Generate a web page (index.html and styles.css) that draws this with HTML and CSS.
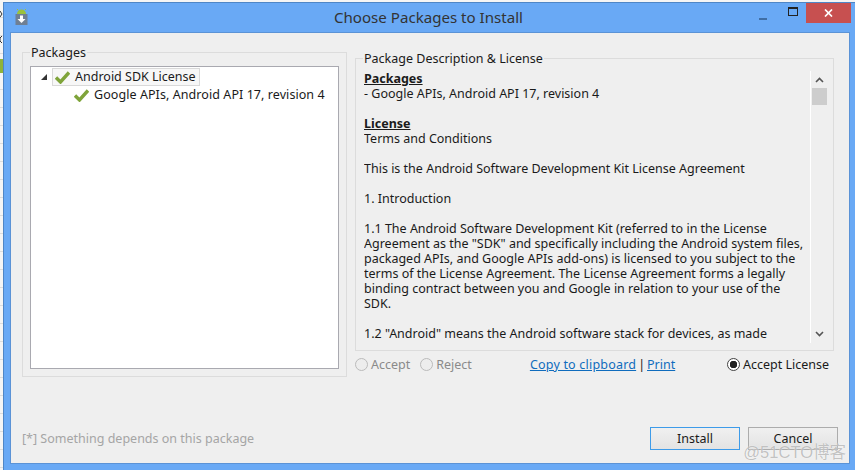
FILE: index.html
```html
<!DOCTYPE html>
<html lang="en">
<head>
    <meta charset="UTF-8">
    <title>Choose Packages to Install</title>
    <link rel="stylesheet" href="styles.css">
</head>
<body>

<div class="desktop">
    <!-- Sliver of the window behind the dialog -->
    <div class="behind">
        <svg width="3" height="74" viewBox="0 0 3 74">
            <path d="M0 11 L2 14 L0 17" fill="none" stroke="#333" stroke-width="1"/>
            <path d="M2 36 L0 38 L0 41 L2 43" fill="none" stroke="#333" stroke-width="1"/>
            <rect x="0" y="59" width="3" height="14" fill="#8fb339"/>
        </svg>
    </div>

    <div class="dialog">
        <div class="titlebar">
            <svg class="app-icon" width="13" height="16" viewBox="0 0 13 16">
                <path d="M2 5 A4.5 4.5 0 0 1 11 5 Z" fill="#9bc23c"/>
                <path d="M3 1 L2 0 M10 1 L11 0" stroke="#9bc23c" stroke-width="1"/>
                <rect x="0.5" y="5" width="12" height="11" fill="#6f7f93"/>
                <path d="M5 6.5 H8 V10 H10.5 L6.5 14 L2.5 10 H5 Z" fill="#fff"/>
            </svg>
            <div class="title">Choose Packages to Install</div>
            <div class="controls">
                <div class="ctl ctl-min"><span class="min-bar"></span></div>
                <div class="ctl ctl-max"><span class="max-box"></span></div>
                <div class="ctl-close">
                    <svg width="9" height="8" viewBox="0 0 9 8">
                        <path d="M1 0.5 L8 7.5 M8 0.5 L1 7.5" stroke="#fff" stroke-width="1.7" fill="none"/>
                    </svg>
                </div>
            </div>
        </div>

        <div class="client">
            <div class="panels">
                <!-- Left group with the package tree -->
                <fieldset class="group group-packages">
                    <legend>Packages</legend>
                    <div class="tree">
                        <div class="tree-row">
                            <span class="twisty"></span>
                            <div class="tree-selected">
                                <svg class="check" width="15" height="13" viewBox="0 0 15 13">
                                    <path d="M1 6.5 L5.5 11 L14 1.5" fill="none" stroke="#7fa43a" stroke-width="3.4"/>
                                </svg>
                                <span class="tree-label">Android SDK License</span>
                            </div>
                        </div>
                        <div class="tree-row tree-child">
                            <svg class="check" width="15" height="13" viewBox="0 0 15 13">
                                <path d="M1 6.5 L5.5 11 L14 1.5" fill="none" stroke="#7fa43a" stroke-width="3.4"/>
                            </svg>
                            <span class="tree-label">Google APIs, Android API 17, revision 4</span>
                        </div>
                    </div>
                </fieldset>

                <!-- Right side: license text and accept controls -->
                <div class="license-side">
                    <fieldset class="group group-license">
                        <legend>Package Description &amp; License</legend>
                        <div class="license-box">
                            <div class="license-text">
                                <p><b>Packages</b></p>
                                <p>- Google APIs, Android API 17, revision 4</p>
                                <p>&nbsp;</p>
                                <p><b>License</b></p>
                                <p>Terms and Conditions</p>
                                <p>&nbsp;</p>
                                <p>This is the Android Software Development Kit License Agreement</p>
                                <p>&nbsp;</p>
                                <p>1. Introduction</p>
                                <p>&nbsp;</p>
                                <p>1.1 The Android Software Development Kit (referred to in the License</p>
                                <p>Agreement as the "SDK" and specifically including the Android system files,</p>
                                <p>packaged APIs, and Google APIs add-ons) is licensed to you subject to the</p>
                                <p>terms of the License Agreement. The License Agreement forms a legally</p>
                                <p>binding contract between you and Google in relation to your use of the</p>
                                <p>SDK.</p>
                                <p>&nbsp;</p>
                                <p>1.2 "Android" means the Android software stack for devices, as made</p>
                            </div>
                            <div class="scrollbar">
                                <svg width="9" height="6" viewBox="0 0 9 6">
                                    <path d="M1 5 L4.5 1.5 L8 5" fill="none" stroke="#555" stroke-width="1.6"/>
                                </svg>
                                <span class="thumb"></span>
                                <svg class="arrow-down" width="9" height="6" viewBox="0 0 9 6">
                                    <path d="M1 1 L4.5 4.5 L8 1" fill="none" stroke="#555" stroke-width="1.6"/>
                                </svg>
                            </div>
                        </div>
                    </fieldset>

                    <div class="accept-row">
                        <label class="radio disabled"><span class="dot"></span>Accept</label>
                        <label class="radio disabled"><span class="dot"></span>Reject</label>
                        <div class="links"><a class="copy-link" href="#">Copy to clipboard</a><span>|</span><a href="#">Print</a></div>
                        <label class="radio"><span class="dot on"></span>Accept License</label>
                    </div>
                </div>
            </div>

            <div class="footer">
                <span class="hint">[*] Something depends on this package</span>
                <div class="buttons">
                    <button class="btn btn-default">Install</button>
                    <button class="btn">Cancel</button>
                </div>
            </div>
        </div>
    </div>

    <div class="watermark">@51CTO博客</div>
</div>

</body>
</html>
```

FILE: styles.css
```css
/* Page is the captured region of the desktop */
body {
    margin: 0;
    font-family: "Noto Sans", sans-serif;
    font-size: 12.5px;
    color: #1a1a1a;
}

.desktop {
    position: relative;
    display: flex;
    width: 855px;
    height: 470px;
    overflow: hidden;
    background-color: #f5f5f5;
}

.behind {
    width: 3px;
    flex-shrink: 0;
    background: repeating-linear-gradient(#f5f5f5 0 17px, #dcdcdc 17px 18px);
}

.behind svg {
    display: block;
}

/* Window frame */
.dialog {
    flex: 1;
    display: flex;
    flex-direction: column;
    background-color: #69a9f5;
    border-left: 1px solid #4f86c6;
    border-top: 1px solid #4f86c6;
    margin-top: 2px;
    padding: 0 5px 6px 6px;
}

.titlebar {
    position: relative;
    height: 29px;
    display: flex;
    justify-content: center;
    flex-shrink: 0;
}

.app-icon {
    position: absolute;
    left: 5px;
    top: 6px;
}

.title {
    font-size: 15.1px;
    color: #333;
    margin-top: 4px;
    padding-right: 3px;
}

.controls {
    position: absolute;
    right: -1px;
    top: 0;
    display: flex;
}

.ctl {
    width: 31px;
    height: 20px;
    display: flex;
    justify-content: center;
    align-items: center;
}

.min-bar {
    width: 8px;
    height: 2px;
    margin-top: 11px;
    margin-left: 7px;
    background-color: #3f6ea5;
}

.max-box {
    width: 8px;
    height: 6px;
    border: 1px solid #222;
    border-top-width: 2px;
    margin-bottom: 3px;
    margin-left: 5px;
}

.ctl-close {
    width: 45px;
    height: 20px;
    background-color: #c75050;
    display: flex;
    justify-content: center;
    align-items: center;
}

.client {
    flex: 1;
    display: flex;
    flex-direction: column;
    background-color: #efefef;
    border: 1px solid #5b93d6;
    padding: 12px 11px 0 11px;
    min-height: 0;
}

.panels {
    display: flex;
    gap: 8px;
    align-items: flex-start;
}

/* Group boxes */
.group {
    margin: 0;
    padding: 0;
    border: 1px solid #dcdcdc;
    min-width: 0;
    box-sizing: border-box;
}

.group legend {
    padding: 0 1px;
    line-height: 15px;
}

.group-packages {
    width: 325px;
    height: 332px;
    padding: 6px 7px 7px 7px;
}

.tree {
    height: 303px;
    box-sizing: border-box;
    background-color: #fff;
    border: 1px solid #a9a9b0;
    padding-top: 1px;
}

.tree-row {
    display: flex;
    align-items: center;
    height: 18px;
    white-space: nowrap;
}

.tree-label {
    padding-bottom: 2px;
}

.twisty {
    width: 0;
    height: 0;
    margin-left: 10px;
    margin-right: 5px;
    border-left: 6px solid transparent;
    border-bottom: 6px solid #333;
}

.tree-selected {
    display: flex;
    align-items: center;
    gap: 5px;
    height: 16px;
    padding: 0 3px 0 2px;
    background-color: #f7f7f7;
    border: 1px solid #d9d9d9;
}

.tree-child {
    padding-left: 43px;
    gap: 5px;
    letter-spacing: 0.07px;
}

.license-side {
    flex: 1;
    min-width: 0;
}

.group-license {
    width: 479px;
    height: 300px;
    margin-top: 6px;
    padding: 5px 6px 7px 2px;
}

.group-license legend {
    margin-left: 5px;
}

.license-box {
    display: flex;
    padding-left: 6px;
}

.license-text {
    flex: 1;
    min-width: 0;
    white-space: nowrap;
    overflow: hidden;
}

.license-text p {
    margin: 0;
    line-height: 15px;
}

.license-text b {
    text-decoration: underline;
}

.scrollbar {
    width: 17px;
    height: 272px;
    flex-shrink: 0;
    display: flex;
    flex-direction: column;
    align-items: center;
    border-left: 1px solid #fff;
    padding-top: 6px;
    box-sizing: border-box;
}

.thumb {
    display: block;
    width: 15px;
    height: 17px;
    margin-top: 5px;
    background-color: #cdcdcd;
}

.arrow-down {
    margin-top: auto;
    margin-bottom: 6px;
}

/* Accept / Reject row */
.accept-row {
    display: flex;
    align-items: center;
    margin-top: 4px;
    height: 18px;
    width: 474px;
    white-space: nowrap;
}

.radio {
    display: flex;
    align-items: center;
    gap: 3px;
    margin-right: 10px;
}

.radio:last-child {
    margin-right: 0;
    margin-left: auto;
}

.radio.disabled {
    color: #8a8a8a;
}

.dot {
    width: 11px;
    height: 11px;
    border: 1px solid #bbb;
    border-radius: 50%;
    background-color: #ededed;
}

.dot.on {
    border-color: #444;
    background: radial-gradient(circle, #222 0 3.5px, #fff 4px);
}

.links {
    display: flex;
    gap: 2px;
    margin-left: 48px;
}

.links a {
    color: #0f6cbd;
}

.links .copy-link {
    letter-spacing: 0.2px;
}

/* Bottom row */
.footer {
    position: relative;
    display: flex;
    justify-content: space-between;
    align-items: flex-end;
    margin-top: auto;
    padding-bottom: 13px;
}

.hint {
    color: #a5a5a5;
    margin-bottom: 3px;
}

.buttons {
    display: flex;
    gap: 8px;
}

.btn {
    width: 90px;
    height: 23px;
    padding: 0;
    font-family: inherit;
    font-size: 12.5px;
    color: #1a1a1a;
    background: linear-gradient(#f0f0f0, #e3e3e3);
    border: 1px solid #acacac;
}

.btn-default {
    border-color: #3d9be9;
}

.watermark {
    position: absolute;
    right: 9px;
    bottom: 7px;
    font-family: "Liberation Sans", "Noto Sans CJK SC", sans-serif;
    font-size: 16.5px;
    color: rgba(120, 120, 120, 0.45);
    text-shadow: 0 0 1px #fff;
}
```
